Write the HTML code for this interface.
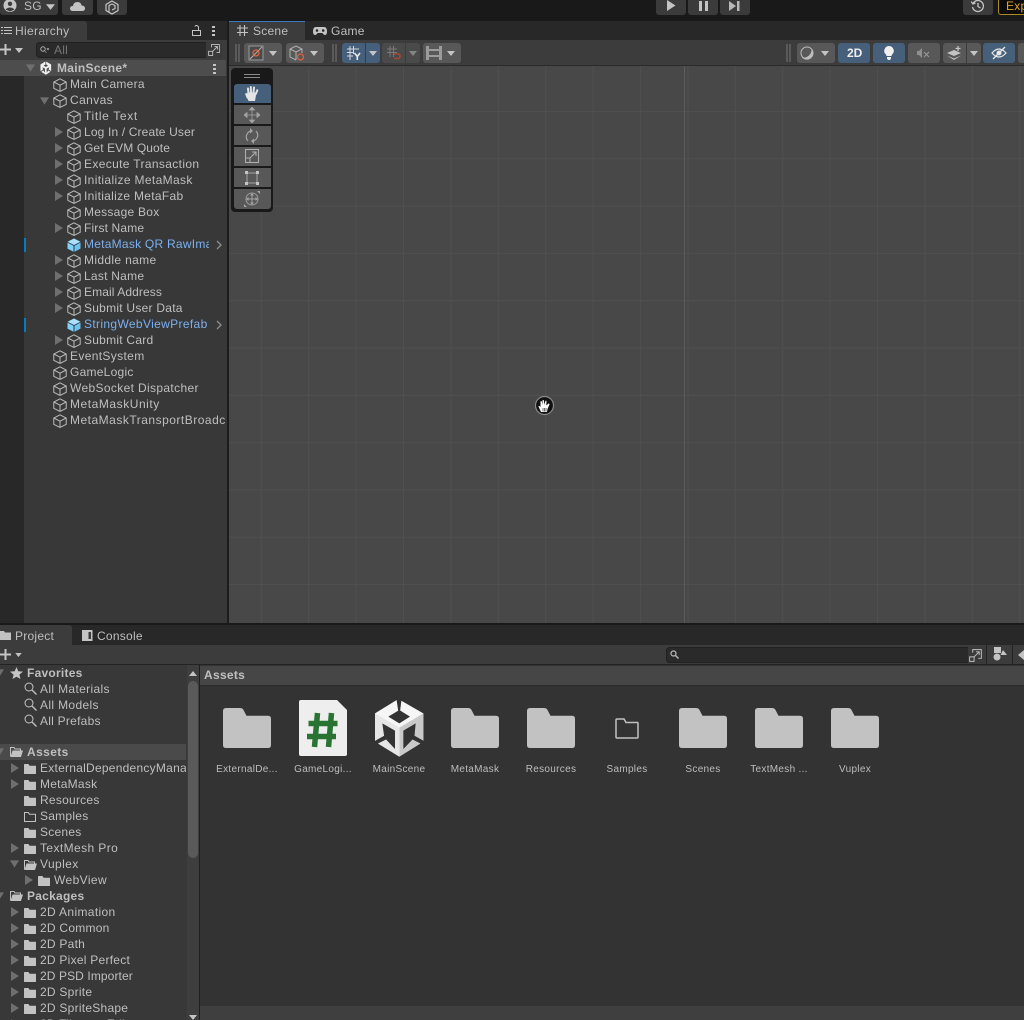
<!DOCTYPE html>
<html><head><meta charset="utf-8"><title>Unity Editor</title>
<style>
html,body{margin:0;padding:0;background:#191919}
#p{position:relative;width:1024px;height:1020px;overflow:hidden;background:#191919;font:12px/16px "Liberation Sans",sans-serif;color:#bfbfbf;letter-spacing:.25px;filter:blur(.3px)}
#p div,#p svg,#p span{position:absolute}
.t{white-space:nowrap;height:16px;overflow:hidden}
.b{font-weight:bold}
.btn{background:#585858;border-radius:3px;height:20px;top:43px}
.top{background:#3b3b3b;border-radius:0 0 3px 3px;height:15px;top:0}
.blue{background:#46607c}
.tool{left:234px;width:37px;height:19px;background:#585858}
#p .tool.blue{background:#46607c}
.l{font-size:10px;top:762px;text-align:center;width:76px;color:#bdbdbd;letter-spacing:.3px}
.cu{width:14px;height:14px}
.ar{width:8px;height:10px}
.grip{width:5px;height:18px;top:44px;border-left:2px solid #5a5a5a;border-right:2px solid #5a5a5a;box-sizing:border-box}
</style></head><body>
<svg width="0" height="0" style="position:absolute"><defs>
<symbol id="cube" viewBox="0 0 14 14"><path d="M7 .8 13.200 4v6.300L7 13.400.8 10.300V4ZM.8 4 7 7.200 13.200 4M7 7.200v6.200" fill="none" stroke="#bcbcbc" stroke-width="1"/></symbol>
<symbol id="pcube" viewBox="0 0 14 14"><path d="M7 .5 13.500 3.800 7 7 .5 3.800Z" fill="#a8e0ff"/><path d="M.5 4.600 6.500 7.800v6L.5 10.600Z" fill="#7fd0fb"/><path d="M13.500 4.600 7.500 7.800v6l6-3.200Z" fill="#6cc4f5"/></symbol>
<symbol id="ar" viewBox="0 0 8 10"><path d="M0 0 8 5 0 10Z" fill="#6f6f6f"/></symbol>
<symbol id="ad" viewBox="0 0 10 8"><path d="M0 0H10L5 8Z" fill="#6f6f6f"/></symbol>
<symbol id="dd" viewBox="0 0 8 5"><path d="M0 0H8L4 5Z" fill="#c4c4c4"/></symbol>
<symbol id="fl" viewBox="0 0 12 10"><path d="M.6 0H4.400L5.600 1.700H11.400Q12 1.700 12 2.300V9.400Q12 10 11.400 10H.6Q0 10 0 9.400V.6Q0 0 .6 0Z" fill="#c2c2c2"/></symbol>
<symbol id="fo" viewBox="0 0 13 10"><path d="M.5 9.500V.5H4L5 2H10.500V3.500" fill="none" stroke="#c2c2c2"/><path d="M2.500 3.500H13L11 10H.5Z" fill="#c2c2c2"/></symbol>
<symbol id="flo" viewBox="0 0 12 10"><path d="M.5.500H4.300L5.400 2.200H11.500V9.500H.5Z" fill="none" stroke="#c2c2c2"/></symbol>
<symbol id="big" viewBox="0 0 48 40"><path d="M3 0H17Q19.500 0 20.500 2L23.500 7.800H45Q48 7.800 48 10.800V37Q48 40 45 40H3Q0 40 0 37V3Q0 0 3 0Z" fill="#c2c2c2"/></symbol>
<symbol id="mag" viewBox="0 0 13 13"><circle cx="5" cy="5" r="4" fill="none" stroke="#c4c4c4"/><path d="M8 8 12.500 12.500" stroke="#c4c4c4" stroke-width="1.300"/></symbol>
<symbol id="ext" viewBox="0 0 14 14"><path d="M4 4V.7H13.300V10H10M.7 8.500H5.500V13.300H.7ZM5 9 11 3M7.500 3H11V6.500" fill="none" stroke="#c4c4c4"/></symbol>
</defs></svg>
<div id="p">

<!-- top bar -->
<div class="top" style="left:0;width:58px"></div>
<svg style="left:3px;top:0" width="14" height="13" viewBox="0 0 14 13"><circle cx="7" cy="5.500" r="6.500" fill="#c4c4c4"/><circle cx="7" cy="3.800" r="2.200" fill="#3b3b3b"/><path d="M2.500 9.500Q7 5.500 11.500 9.500L7 11.500Z" fill="#3b3b3b"/></svg>
<div class="t" style="left:24px;top:-2px">SG</div>
<svg style="left:46px;top:4px" width="9" height="6"><use href="#dd"/></svg>
<div class="top" style="left:62px;width:31px"></div>
<svg style="left:70px;top:1px" width="15" height="10" viewBox="0 0 15 10"><path d="M3 10Q0 10 0 7.500 0 5 3 5 3.500 1 7.500 1 11 1 11.500 4.500 15 4.500 15 7.500 15 10 12 10Z" fill="#c4c4c4"/></svg>
<div class="top" style="left:97px;width:30px"></div>
<svg style="left:105px;top:0" width="14" height="15" viewBox="0 0 14 15"><path d="M7 1 13 4.500V10.500L7 14 1 10.500V4.500ZM4 12V5.500L7 4 10 5.500V8.500L7 10" fill="none" stroke="#c4c4c4" stroke-width="1.200"/></svg>
<div class="top" style="left:656px;width:30px"></div>
<div class="top" style="left:688px;width:30px"></div>
<div class="top" style="left:720px;width:30px"></div>
<svg style="left:666px;top:0" width="10" height="11"><path d="M1 0 9.500 5.500 1 11Z" fill="#c4c4c4"/></svg>
<svg style="left:699px;top:1px" width="9" height="10"><path d="M0 0H3V10H0ZM6 0H9V10H6Z" fill="#c4c4c4"/></svg>
<svg style="left:729px;top:1px" width="11" height="10"><path d="M0 0 7 5 0 10ZM8 0H10.500V10H8Z" fill="#b8b8b8"/></svg>
<div class="top" style="left:963px;width:30px"></div>
<svg style="left:971px;top:0" width="14" height="13" viewBox="0 0 14 13"><path d="M2 3.500A5.500 5.500 0 1 1 1.500 7M7 3V6.500L9.500 8M0 1.500 2 4 4.500 3" fill="none" stroke="#c4c4c4" stroke-width="1.300"/></svg>
<div style="left:998px;top:-2px;width:30px;height:17px;background:#0b0b0b;border:1px solid #b08a1c;border-radius:3px;box-sizing:border-box"></div>
<div class="t" style="left:1006px;top:-2px;color:#e0a418">Exp</div>

<!-- hierarchy -->
<div style="left:0;top:21px;width:227px;height:19px;background:#282828"></div>
<div style="left:0;top:21px;width:87px;height:19px;background:#3c3c3c;border-radius:0 3px 0 0"></div>
<svg style="left:1px;top:26px" width="11" height="9" viewBox="0 0 11 9"><path d="M3 1.500H11M3 4.500H11M3 7.500H11M0 1.500H2M0 4.500H2M0 7.500H2" stroke="#c4c4c4"/></svg>
<div class="t" style="left:15px;top:23px;letter-spacing:.35px">Hierarchy</div>
<svg style="left:192px;top:25px" width="9" height="11" viewBox="0 0 9 11"><path d="M.5 5.500H8.500V10.500H.5ZM6.500 5V2.500A2 2 0 0 0 2.800 1.500" fill="none" stroke="#c4c4c4"/></svg>
<svg style="left:212px;top:26px" width="3" height="10"><path d="M0 0H3V2H0ZM0 4H3V6H0ZM0 8H3V10H0Z" fill="#c4c4c4"/></svg>
<div style="left:0;top:40px;width:227px;height:20px;background:#3c3c3c"></div>
<svg style="left:0;top:44px" width="11" height="11"><path d="M0 4.500H11V6.500H0ZM4.500 0H6.500V11H4.500Z" fill="#c4c4c4"/></svg>
<svg style="left:15px;top:48px" width="8" height="5"><use href="#dd"/></svg>
<div style="left:36px;top:42px;width:186px;height:16px;background:#2a2a2a;border-radius:4px;box-shadow:inset 0 0 0 1px #212121"></div>
<svg style="left:40px;top:46px" width="9" height="8" viewBox="0 0 9 8"><circle cx="3" cy="3" r="2.200" fill="none" stroke="#b0b0b0"/><path d="M4.500 4.500 6.500 7M7 2.500H9L8 4Z" fill="#b0b0b0" stroke="#b0b0b0" stroke-width=".6"/></svg>
<div class="t" style="left:54px;top:42px;color:#777">All</div>
<div style="left:206px;top:42px;width:16px;height:16px;background:#3a3a3a;border-radius:0 4px 4px 0"></div>
<svg style="left:208px;top:44px" width="12" height="12"><use href="#ext"/></svg>

<div style="left:0;top:60px;width:227px;height:564px;background:#383838"></div>
<div style="left:0;top:60px;width:24px;height:564px;background:#282828"></div>
<div style="left:0;top:60px;width:226px;height:16px;background:#4d4d4d"></div>
<svg style="left:26px;top:64px" width="9" height="8"><use href="#ad"/></svg>
<svg style="left:39px;top:61px" width="14" height="14" viewBox="0 0 210 198" preserveAspectRatio="none"><path d="M100 4 182 50V146L103 194 22 146V50Z" fill="#f0f0f0"/><path d="M70 65 103 45 135 65 103 85ZM94 2H110L105 50H98ZM52 88 90 108V165L62 125ZM152 88 115 108V165L145 125ZM16 146 62 122 70 132 26 158ZM189 146 145 122 137 132 179 158Z" fill="#4d4d4d"/></svg>
<div class="t b" style="left:57px;top:60px;letter-spacing:.3px;font-weight:bold">MainScene*</div>
<svg style="left:213px;top:64px" width="3" height="10"><path d="M0 0H3V2H0ZM0 4H3V6H0ZM0 8H3V10H0Z" fill="#c4c4c4"/></svg>

<svg class="cu" style="left:53px;top:78px"><use href="#cube"/></svg><div class="t" style="left:70px;top:76px">Main Camera</div>
<svg style="left:40px;top:97px" width="9" height="8"><use href="#ad"/></svg>
<svg class="cu" style="left:53px;top:94px"><use href="#cube"/></svg><div class="t" style="left:70px;top:92px;letter-spacing:.4px">Canvas</div>
<svg class="cu" style="left:67px;top:110px"><use href="#cube"/></svg><div class="t" style="left:84px;top:108px;letter-spacing:.65px">Title Text</div>
<svg class="ar" style="left:55px;top:127px"><use href="#ar"/></svg><svg class="cu" style="left:67px;top:126px"><use href="#cube"/></svg><div class="t" style="left:84px;top:124px;letter-spacing:.15px">Log In / Create User</div>
<svg class="ar" style="left:55px;top:143px"><use href="#ar"/></svg><svg class="cu" style="left:67px;top:142px"><use href="#cube"/></svg><div class="t" style="left:84px;top:140px;letter-spacing:.1px">Get EVM Quote</div>
<svg class="ar" style="left:55px;top:159px"><use href="#ar"/></svg><svg class="cu" style="left:67px;top:158px"><use href="#cube"/></svg><div class="t" style="left:84px;top:156px;letter-spacing:.35px">Execute Transaction</div>
<svg class="ar" style="left:55px;top:175px"><use href="#ar"/></svg><svg class="cu" style="left:67px;top:174px"><use href="#cube"/></svg><div class="t" style="left:84px;top:172px;letter-spacing:.35px">Initialize MetaMask</div>
<svg class="ar" style="left:55px;top:191px"><use href="#ar"/></svg><svg class="cu" style="left:67px;top:190px"><use href="#cube"/></svg><div class="t" style="left:84px;top:188px;letter-spacing:.3px">Initialize MetaFab</div>
<svg class="cu" style="left:67px;top:206px"><use href="#cube"/></svg><div class="t" style="left:84px;top:204px">Message Box</div>
<svg class="ar" style="left:55px;top:223px"><use href="#ar"/></svg><svg class="cu" style="left:67px;top:222px"><use href="#cube"/></svg><div class="t" style="left:84px;top:220px;letter-spacing:.15px">First Name</div>
<div style="left:24px;top:238px;width:2px;height:14px;background:#1178b8"></div>
<svg class="cu" style="left:67px;top:238px"><use href="#pcube"/></svg><div class="t" style="left:84px;top:236px;width:125px;color:#7cb0ee">MetaMask QR RawImage</div>
<svg style="left:216px;top:240px" width="6" height="10"><path d="M1 1 5 5 1 9" fill="none" stroke="#8e8e8e" stroke-width="1.300"/></svg>
<svg class="ar" style="left:55px;top:255px"><use href="#ar"/></svg><svg class="cu" style="left:67px;top:254px"><use href="#cube"/></svg><div class="t" style="left:84px;top:252px;letter-spacing:.35px">Middle name</div>
<svg class="ar" style="left:55px;top:271px"><use href="#ar"/></svg><svg class="cu" style="left:67px;top:270px"><use href="#cube"/></svg><div class="t" style="left:84px;top:268px">Last Name</div>
<svg class="ar" style="left:55px;top:287px"><use href="#ar"/></svg><svg class="cu" style="left:67px;top:286px"><use href="#cube"/></svg><div class="t" style="left:84px;top:284px;letter-spacing:.1px">Email Address</div>
<svg class="ar" style="left:55px;top:303px"><use href="#ar"/></svg><svg class="cu" style="left:67px;top:302px"><use href="#cube"/></svg><div class="t" style="left:84px;top:300px">Submit User Data</div>
<div style="left:24px;top:318px;width:2px;height:14px;background:#1178b8"></div>
<svg class="cu" style="left:67px;top:318px"><use href="#pcube"/></svg><div class="t" style="left:84px;top:316px;width:125px;color:#7cb0ee;letter-spacing:.35px">StringWebViewPrefab</div>
<svg style="left:216px;top:320px" width="6" height="10"><path d="M1 1 5 5 1 9" fill="none" stroke="#8e8e8e" stroke-width="1.300"/></svg>
<svg class="ar" style="left:55px;top:335px"><use href="#ar"/></svg><svg class="cu" style="left:67px;top:334px"><use href="#cube"/></svg><div class="t" style="left:84px;top:332px">Submit Card</div>
<svg class="cu" style="left:53px;top:350px"><use href="#cube"/></svg><div class="t" style="left:70px;top:348px;letter-spacing:.35px">EventSystem</div>
<svg class="cu" style="left:53px;top:366px"><use href="#cube"/></svg><div class="t" style="left:70px;top:364px">GameLogic</div>
<svg class="cu" style="left:53px;top:382px"><use href="#cube"/></svg><div class="t" style="left:70px;top:380px;letter-spacing:.35px">WebSocket Dispatcher</div>
<svg class="cu" style="left:53px;top:398px"><use href="#cube"/></svg><div class="t" style="left:70px;top:396px;letter-spacing:.55px">MetaMaskUnity</div>
<svg class="cu" style="left:53px;top:414px"><use href="#cube"/></svg><div class="t" style="left:70px;top:412px;width:155px;letter-spacing:.5px">MetaMaskTransportBroadcaster</div>

<!-- scene -->
<div style="left:227px;top:21px;width:797px;height:603px;background:#1c1c1c"></div>
<div style="left:229px;top:21px;width:795px;height:19px;background:#282828"></div>
<div style="left:229px;top:21px;width:76px;height:19px;background:#3c3c3c"></div>
<div style="left:229px;top:21px;width:76px;height:1px;background:#3a79bb"></div>
<svg style="left:237px;top:25px" width="11" height="11" viewBox="0 0 11 11"><path d="M3 0V11M7.500 0V11M0 3H11M0 7.500H11" stroke="#c4c4c4" stroke-width="1.100"/></svg>
<div class="t" style="left:253px;top:23px">Scene</div>
<svg style="left:313px;top:27px" width="14" height="8" viewBox="0 0 14 8"><path d="M3 0H11Q14 0 14 4.500 14 8 12 8 10.500 8 9.500 6H4.500Q3.500 8 2 8 0 8 0 4.500 0 0 3 0Z" fill="#c4c4c4"/><circle cx="4" cy="3.500" r="1.300" fill="#282828"/><circle cx="10.200" cy="3.500" r="1.300" fill="#282828"/></svg>
<div class="t" style="left:331px;top:23px">Game</div>
<div style="left:229px;top:40px;width:795px;height:25px;background:#3c3c3c"></div>
<div style="left:229px;top:65px;width:795px;height:1px;background:#2a2a2a"></div>
<div class="grip" style="left:235px"></div>
<div class="btn" style="left:244px;width:38px"></div>
<svg style="left:248px;top:45px" width="16" height="16" viewBox="0 0 16 16"><path d="M1 1H15V15H1Z" fill="#4a4a4a" stroke="#9a9a9a"/><path d="M2 14 14 2" stroke="#b0b0b0"/><circle cx="8" cy="8" r="3" fill="none" stroke="#e0613a" stroke-width="1.300"/></svg>
<svg style="left:269px;top:51px" width="8" height="5"><use href="#dd"/></svg>
<div class="btn" style="left:286px;width:38px"></div>
<svg style="left:289px;top:45px" width="16" height="16" viewBox="0 0 16 16"><path d="M7 1 13 4V8M7 15 1 12V4L7 1M1 4 7 7 13 4M7 7V15" fill="none" stroke="#b0b0b0"/><circle cx="11.500" cy="12" r="3" fill="#585858" stroke="#e0613a" stroke-width="1.300"/></svg>
<svg style="left:310px;top:51px" width="8" height="5"><use href="#dd"/></svg>
<div class="grip" style="left:332px"></div>
<div class="btn blue" style="left:342px;width:23px;border-radius:3px 0 0 3px"></div>
<div class="btn blue" style="left:366px;width:14px;border-radius:0 3px 3px 0"></div>
<svg style="left:347px;top:46px" width="14" height="14" viewBox="0 0 14 14"><path d="M3 0V14M6.500 0V8M0 3H12M0 6.500H7M0 10H6" stroke="#d8d8d8"/><path d="M7.500 7 10.300 10.500 13 7M10.300 10.500V14" fill="none" stroke="#eee" stroke-width="1.500"/></svg>
<svg style="left:369px;top:51px" width="8" height="5"><use href="#dd"/></svg>
<div class="btn" style="left:382px;width:23px;background:#4a4a4a;border-radius:3px 0 0 3px"></div>
<div class="btn" style="left:406px;width:14px;background:#4a4a4a;border-radius:0 3px 3px 0"></div>
<svg style="left:387px;top:46px" width="14" height="14" viewBox="0 0 14 14"><path d="M3 0V11M6.500 0V11M0 3H10M0 6.500H10" stroke="#7a7a7a"/><path d="M7 8H11.500Q13 8 13 10T11.500 12.500H7" fill="none" stroke="#a4492f" stroke-width="1.500"/></svg>
<svg style="left:409px;top:51px" width="8" height="5"><path d="M0 0H8L4 5Z" fill="#858585"/></svg>
<div class="btn" style="left:423px;width:38px"></div>
<svg style="left:426px;top:46px" width="16" height="14" viewBox="0 0 16 14"><path d="M0 0H3V14H0ZM13 0H16V14H13ZM3 3H13V5H3ZM3 9H13V11H3Z" fill="#9b9b9b"/></svg>
<svg style="left:447px;top:51px" width="8" height="5"><use href="#dd"/></svg>

<div class="grip" style="left:786px"></div>
<div class="btn" style="left:797px;width:38px"></div>
<svg style="left:800px;top:46px" width="14" height="14" viewBox="0 0 14 14"><circle cx="7" cy="7" r="6" fill="#585858" stroke="#bdbdbd"/><path d="M11.500 3A6 6 0 0 1 2 11.500 8 8 0 0 0 11.500 3Z" fill="#bdbdbd"/></svg>
<svg style="left:821px;top:51px" width="8" height="5"><use href="#dd"/></svg>
<div class="btn blue" style="left:838px;width:32px"></div>
<div class="t b" style="left:847px;top:45px;color:#eee;letter-spacing:0">2D</div>
<div class="btn blue" style="left:873px;width:32px"></div>
<svg style="left:884px;top:46px" width="10" height="14" viewBox="0 0 10 14"><path d="M5 0A4.800 4.800 0 0 1 8 8.500L7.500 10H2.500L2 8.500A4.800 4.800 0 0 1 5 0ZM3 11H7V12.500L6 14H4L3 12.500Z" fill="#f0f0f0"/></svg>
<div class="btn" style="left:908px;width:32px"></div>
<svg style="left:917px;top:48px" width="14" height="10" viewBox="0 0 14 10"><path d="M0 3H2L5 0V10L2 7H0Z" fill="#8f8f8f"/><path d="M7 4 12 9M12 4 7 9" stroke="#9a9a9a"/></svg>
<div class="btn" style="left:943px;width:23px;border-radius:3px 0 0 3px"></div>
<div class="btn" style="left:967px;width:14px;border-radius:0 3px 3px 0"></div>
<svg style="left:947px;top:46px" width="15" height="14" viewBox="0 0 15 14"><path d="M7 4 14 7 7 10 0 7ZM0 9.500 7 12.500 14 9.500 7 14Z" fill="#c4c4c4"/><path d="M11 0V5M8.500 2.500H13.500" stroke="#c4c4c4" stroke-width="1.300"/></svg>
<svg style="left:970px;top:51px" width="8" height="5"><use href="#dd"/></svg>
<div class="btn blue" style="left:983px;width:32px"></div>
<svg style="left:991px;top:46px" width="16" height="14" viewBox="0 0 16 14"><path d="M1 7Q8-1 15 7 8 15 1 7Z" fill="none" stroke="#e8e8e8" stroke-width="1.200"/><circle cx="8" cy="7" r="2.500" fill="#e8e8e8"/><path d="M2 13 14 1" stroke="#e8e8e8" stroke-width="1.300"/></svg>
<div class="btn" style="left:1018px;width:20px"></div>

<svg style="left:229px;top:66px" width="795" height="557"><defs><pattern id="gx" x="31.800" width="47.400" height="557" patternUnits="userSpaceOnUse"><rect width="1" height="557" fill="#4f4f4f"/></pattern><pattern id="gy" y="45" width="795" height="47.300" patternUnits="userSpaceOnUse"><rect width="795" height="1" fill="#4f4f4f"/></pattern></defs><rect width="795" height="557" fill="#484848"/><rect width="795" height="557" fill="url(#gx)"/><rect width="795" height="557" fill="url(#gy)"/><rect x="455" width="1" height="557" fill="#5c5c5c"/></svg>

<!-- tools -->
<div style="left:231px;top:68px;width:42px;height:144px;background:#191919;border-radius:4px"></div>
<div style="left:244px;top:74px;width:16px;height:1px;background:#8a8a8a"></div>
<div style="left:244px;top:77px;width:16px;height:1px;background:#8a8a8a"></div>
<div class="tool blue" style="top:84px;height:19px;border-radius:3px 3px 0 0"></div>
<div class="tool" style="top:105px"></div>
<div class="tool" style="top:126px"></div>
<div class="tool" style="top:147px"></div>
<div class="tool" style="top:168px"></div>
<div class="tool" style="top:189px;height:20px;border-radius:0 0 3px 3px"></div>
<svg style="left:245px;top:85px" width="14" height="16" viewBox="0 0 14 16"><path d="M3.500 8.500 3 3.500M6 7.500 5.800 2M8.500 7.500 9 2.500M10.800 9 12.300 5.300M2.500 12.500 1.200 9" fill="none" stroke="#e4e4e4" stroke-width="2" stroke-linecap="round"/><path d="M2.300 7.500H11.500L10.500 13 10 16H3.500L1.800 12Z" fill="#e4e4e4"/></svg>
<svg style="left:244px;top:107px" width="16" height="16" viewBox="0 0 16 16"><path d="M8 0 10.500 3H5.500ZM8 16 5.500 13H10.500ZM0 8 3 5.500V10.500ZM16 8 13 5.500V10.500ZM8 3V13M3 8H13" fill="#a4a4a4" stroke="#a4a4a4" stroke-width=".8"/></svg>
<svg style="left:245px;top:128px" width="14" height="16" viewBox="0 0 14 16"><path d="M6 3A6 6 0 0 0 3 13M8 13A6 6 0 0 0 11 3" fill="none" stroke="#a4a4a4" stroke-width="1.200"/><path d="M5 0 8 3 5 5.500ZM9 16 6 13 9 10.500Z" fill="#a4a4a4"/></svg>
<svg style="left:245px;top:149px" width="14" height="14" viewBox="0 0 14 14"><path d="M.5.500H13.500V13.500H.5ZM.5 9H5V13.500M5 9 11 3M7 3H11V7" fill="none" stroke="#b0b0b0"/></svg>
<svg style="left:245px;top:171px" width="14" height="14" viewBox="0 0 14 14"><path d="M2 2H12V12H2Z" fill="none" stroke="#a4a4a4"/><path d="M0 0H3V3H0ZM11 0H14V3H11ZM0 11H3V14H0ZM11 11H14V14H11Z" fill="#c4c4c4"/></svg>
<svg style="left:244px;top:191px" width="16" height="16" viewBox="0 0 16 16"><circle cx="8" cy="8" r="6" fill="none" stroke="#9a9a9a"/><path d="M8 3V13M3 8H13" stroke="#a4a4a4"/><path d="M8 2 10 4.500H6ZM8 14 6 11.500H10ZM2 8 4.500 6V10ZM14 8 11.500 6V10ZM13 0H16V3ZM0 16V13L3 16Z" fill="#a4a4a4"/></svg>

<!-- cursor -->
<svg style="left:534px;top:395px" width="21" height="21" viewBox="0 0 21 21"><circle cx="10.500" cy="10.500" r="9" fill="#111" stroke="#8a8a8a" stroke-width="1.200"/><path d="M7 17 4.500 11.500Q4.500 10.500 5.500 11L6.500 12V6.500Q7 5.500 7.800 6.500L8.500 10V5.500Q9.300 4.500 10 5.500V10L11.500 5.800Q12.300 5.300 12.500 6.200L12.300 10.500 14.500 8.500Q15.500 8.500 15.500 9.500L13.500 14 13 17Z" fill="#fff"/><path d="M9 13V16.500M10.500 13V16.500M12 13V16.500" stroke="#333" stroke-width=".7"/></svg>

<!-- project -->
<div style="left:0;top:623px;width:1024px;height:397px;background:#191919"></div>
<div style="left:0;top:625px;width:1024px;height:20px;background:#282828"></div>
<div style="left:0;top:625px;width:72px;height:20px;background:#3c3c3c;border-radius:0 3px 0 0"></div>
<svg style="left:0;top:631px" width="11" height="9"><path d="M0 0H4L5 1.500H11V9H0Z" fill="#c2c2c2"/></svg>
<div class="t" style="left:15px;top:628px">Project</div>
<svg style="left:82px;top:630px" width="11" height="11" viewBox="0 0 11 11"><path d="M0 0H10.500V11H0Z" fill="#c4c4c4"/><path d="M6.500 2H9V9H6.500Z" fill="#3a3a3a"/></svg>
<div class="t" style="left:97px;top:628px">Console</div>
<div style="left:0;top:645px;width:1024px;height:19px;background:#3c3c3c"></div>
<div style="left:0;top:664px;width:1024px;height:1px;background:#232323"></div>
<svg style="left:0;top:649px" width="11" height="11"><path d="M0 4.500H11V6.500H0ZM4.500 0H6.500V11H4.500Z" fill="#c4c4c4"/></svg>
<svg style="left:15px;top:653px" width="7" height="4"><use href="#dd"/></svg>
<div style="left:666px;top:647px;width:319px;height:16px;background:#2a2a2a;border-radius:4px;box-shadow:inset 0 0 0 1px #212121"></div>
<div style="left:968px;top:647px;width:17px;height:16px;background:#3a3a3a;border-radius:0 4px 4px 0"></div>
<svg style="left:670px;top:650px" width="9" height="9" viewBox="0 0 9 9"><circle cx="3.500" cy="3.500" r="2.500" fill="none" stroke="#b8b8b8" stroke-width="1.200"/><path d="M5.500 5.500 8.500 8.500" stroke="#b8b8b8" stroke-width="1.400"/></svg>
<svg style="left:969px;top:649px" width="13" height="13"><use href="#ext"/></svg>
<div style="left:986px;top:645px;width:1px;height:19px;background:#232323"></div>
<div style="left:1012px;top:645px;width:1px;height:19px;background:#232323"></div>
<svg style="left:993px;top:647px" width="14" height="14" viewBox="0 0 14 14"><circle cx="4" cy="10" r="3.500" fill="#c4c4c4"/><rect x="1" y="0" width="7" height="6" fill="#c4c4c4"/><path d="M10 3 14 8H7.500Z" fill="#c4c4c4"/></svg>
<svg style="left:1018px;top:650px" width="6" height="10"><path d="M6 0V10L0 5Z" fill="#c4c4c4"/></svg>

<div style="left:0;top:665px;width:187px;height:355px;background:#383838"></div>
<div style="left:187px;top:665px;width:12px;height:355px;background:#3e3e3e"></div>
<div style="left:188px;top:681px;width:10px;height:177px;background:#5a5a5a;border-radius:5px"></div>
<svg style="left:189px;top:671px" width="8" height="5"><path d="M0 5H8L4 0Z" fill="#c4c4c4"/></svg>
<svg style="left:189px;top:1015px" width="8" height="5"><use href="#dd"/></svg>
<div style="left:199px;top:665px;width:1px;height:355px;background:#1f1f1f"></div>
<div style="left:200px;top:665px;width:824px;height:355px;background:#333"></div>
<div style="left:200px;top:666px;width:824px;height:19px;background:#464646"></div>
<div style="left:200px;top:685px;width:824px;height:1px;background:#2a2a2a"></div>
<div class="t b" style="left:204px;top:667px;color:#c0c0c0;letter-spacing:.3px">Assets</div>
<div style="left:200px;top:1006px;width:824px;height:14px;background:#3f3f3f"></div>

<div style="left:0;top:744px;width:186px;height:16px;background:#4a4a4a"></div>
<svg style="left:-5px;top:669px" width="9" height="8"><use href="#ad"/></svg>
<svg style="left:10px;top:667px" width="13" height="12" viewBox="0 0 13 12"><path d="M6.500 0 8.300 4.200 13 4.600 9.400 7.600 10.500 12 6.500 9.700 2.500 12 3.600 7.600 0 4.600 4.700 4.200Z" fill="#c4c4c4"/></svg>
<div class="t b" style="left:27px;top:665px">Favorites</div>
<svg style="left:24px;top:682px" width="13" height="13"><use href="#mag"/></svg><div class="t" style="left:40px;top:681px;letter-spacing:.35px">All Materials</div>
<svg style="left:24px;top:698px" width="13" height="13"><use href="#mag"/></svg><div class="t" style="left:40px;top:697px;letter-spacing:.35px">All Models</div>
<svg style="left:24px;top:714px" width="13" height="13"><use href="#mag"/></svg><div class="t" style="left:40px;top:713px">All Prefabs</div>

<svg style="left:-5px;top:748px" width="9" height="8"><use href="#ad"/></svg>
<svg style="left:10px;top:747px" width="13" height="10"><use href="#fo"/></svg>
<div class="t b" style="left:27px;top:744px;letter-spacing:.4px">Assets</div>
<svg class="ar" style="left:11px;top:763px"><use href="#ar"/></svg><svg style="left:24px;top:764px" width="12" height="10"><use href="#fl"/></svg><div class="t" style="left:40px;top:760px;width:146px">ExternalDependencyManager</div>
<svg class="ar" style="left:11px;top:779px"><use href="#ar"/></svg><svg style="left:24px;top:780px" width="12" height="10"><use href="#fl"/></svg><div class="t" style="left:40px;top:776px">MetaMask</div>
<svg style="left:24px;top:796px" width="12" height="10"><use href="#fl"/></svg><div class="t" style="left:40px;top:792px">Resources</div>
<svg style="left:24px;top:812px" width="12" height="10"><use href="#flo"/></svg><div class="t" style="left:40px;top:808px">Samples</div>
<svg style="left:24px;top:828px" width="12" height="10"><use href="#fl"/></svg><div class="t" style="left:40px;top:824px">Scenes</div>
<svg class="ar" style="left:11px;top:843px"><use href="#ar"/></svg><svg style="left:24px;top:844px" width="12" height="10"><use href="#fl"/></svg><div class="t" style="left:40px;top:840px;letter-spacing:.4px">TextMesh Pro</div>
<svg style="left:10px;top:860px" width="9" height="8"><use href="#ad"/></svg><svg style="left:24px;top:860px" width="13" height="10"><use href="#fo"/></svg><div class="t" style="left:40px;top:856px;letter-spacing:.4px">Vuplex</div>
<svg class="ar" style="left:25px;top:875px"><use href="#ar"/></svg><svg style="left:38px;top:876px" width="12" height="10"><use href="#fl"/></svg><div class="t" style="left:54px;top:872px;letter-spacing:.4px">WebView</div>
<svg style="left:-5px;top:892px" width="9" height="8"><use href="#ad"/></svg><svg style="left:10px;top:891px" width="13" height="10"><use href="#fo"/></svg><div class="t b" style="left:27px;top:888px">Packages</div>
<svg class="ar" style="left:11px;top:907px"><use href="#ar"/></svg><svg style="left:24px;top:908px" width="12" height="10"><use href="#fl"/></svg><div class="t" style="left:40px;top:904px;letter-spacing:.35px">2D Animation</div>
<svg class="ar" style="left:11px;top:923px"><use href="#ar"/></svg><svg style="left:24px;top:924px" width="12" height="10"><use href="#fl"/></svg><div class="t" style="left:40px;top:920px">2D Common</div>
<svg class="ar" style="left:11px;top:939px"><use href="#ar"/></svg><svg style="left:24px;top:940px" width="12" height="10"><use href="#fl"/></svg><div class="t" style="left:40px;top:936px">2D Path</div>
<svg class="ar" style="left:11px;top:955px"><use href="#ar"/></svg><svg style="left:24px;top:956px" width="12" height="10"><use href="#fl"/></svg><div class="t" style="left:40px;top:952px">2D Pixel Perfect</div>
<svg class="ar" style="left:11px;top:971px"><use href="#ar"/></svg><svg style="left:24px;top:972px" width="12" height="10"><use href="#fl"/></svg><div class="t" style="left:40px;top:968px;letter-spacing:.1px">2D PSD Importer</div>
<svg class="ar" style="left:11px;top:987px"><use href="#ar"/></svg><svg style="left:24px;top:988px" width="12" height="10"><use href="#fl"/></svg><div class="t" style="left:40px;top:984px">2D Sprite</div>
<svg class="ar" style="left:11px;top:1003px"><use href="#ar"/></svg><svg style="left:24px;top:1004px" width="12" height="10"><use href="#fl"/></svg><div class="t" style="left:40px;top:1000px">2D SpriteShape</div>
<svg class="ar" style="left:11px;top:1019px"><use href="#ar"/></svg><svg style="left:24px;top:1020px" width="12" height="10"><use href="#fl"/></svg><div class="t" style="left:40px;top:1016px">2D Tilemap Editor</div>

<!-- assets -->
<svg style="left:223px;top:708px" width="48" height="40"><use href="#big"/></svg>
<svg style="left:299px;top:700px" width="48" height="56" viewBox="0 0 48 56"><path d="M2 0H38L48 10V54Q48 56 46 56H2Q0 56 0 54V2Q0 0 2 0Z" fill="#eeeeee"/><path d="M18.500 13 15.500 47M32.500 13 29.500 47M9.500 23.500H38.500M8 36.500H37" stroke="#2a7433" stroke-width="5.500" fill="none"/></svg>
<svg style="left:365px;top:695px" width="70" height="66" viewBox="0 0 210 198"><path d="M100 12 175 55V140L103 185 30 140V55Z" fill="#f6f6f6"/><path d="M103 98 175 55V140L103 185Z" fill="#c9c9c9"/><path d="M30 55 103 98V185L30 140Z" fill="#e6e6e6"/><path d="M70 65 103 45 135 65 103 85ZM94 10H110L105 50H100ZM52 85 90 107V162L58 128ZM152 85 115 107V162L148 128ZM26 140 58 122 66 132 30 150ZM180 140 148 122 140 132 175 150Z" fill="#333"/></svg>
<svg style="left:451px;top:708px" width="48" height="40"><use href="#big"/></svg>
<svg style="left:527px;top:708px" width="48" height="40"><use href="#big"/></svg>
<svg style="left:615px;top:718px" width="24" height="21" viewBox="0 0 24 21"><path d="M2 1H9L11 4.500H22.500Q23 4.500 23 5.500V19Q23 20 22 20H2Q1 20 1 19V2Q1 1 2 1Z" fill="none" stroke="#c2c2c2" stroke-width="1.500"/></svg>
<svg style="left:679px;top:708px" width="48" height="40"><use href="#big"/></svg>
<svg style="left:755px;top:708px" width="48" height="40"><use href="#big"/></svg>
<svg style="left:831px;top:708px" width="48" height="40"><use href="#big"/></svg>
<div class="t l" style="left:209px">ExternalDe...</div>
<div class="t l" style="left:285px">GameLogi...</div>
<div class="t l" style="left:361px">MainScene</div>
<div class="t l" style="left:437px">MetaMask</div>
<div class="t l" style="left:513px">Resources</div>
<div class="t l" style="left:589px">Samples</div>
<div class="t l" style="left:665px">Scenes</div>
<div class="t l" style="left:741px">TextMesh ...</div>
<div class="t l" style="left:817px">Vuplex</div>
</div>
</body></html>
